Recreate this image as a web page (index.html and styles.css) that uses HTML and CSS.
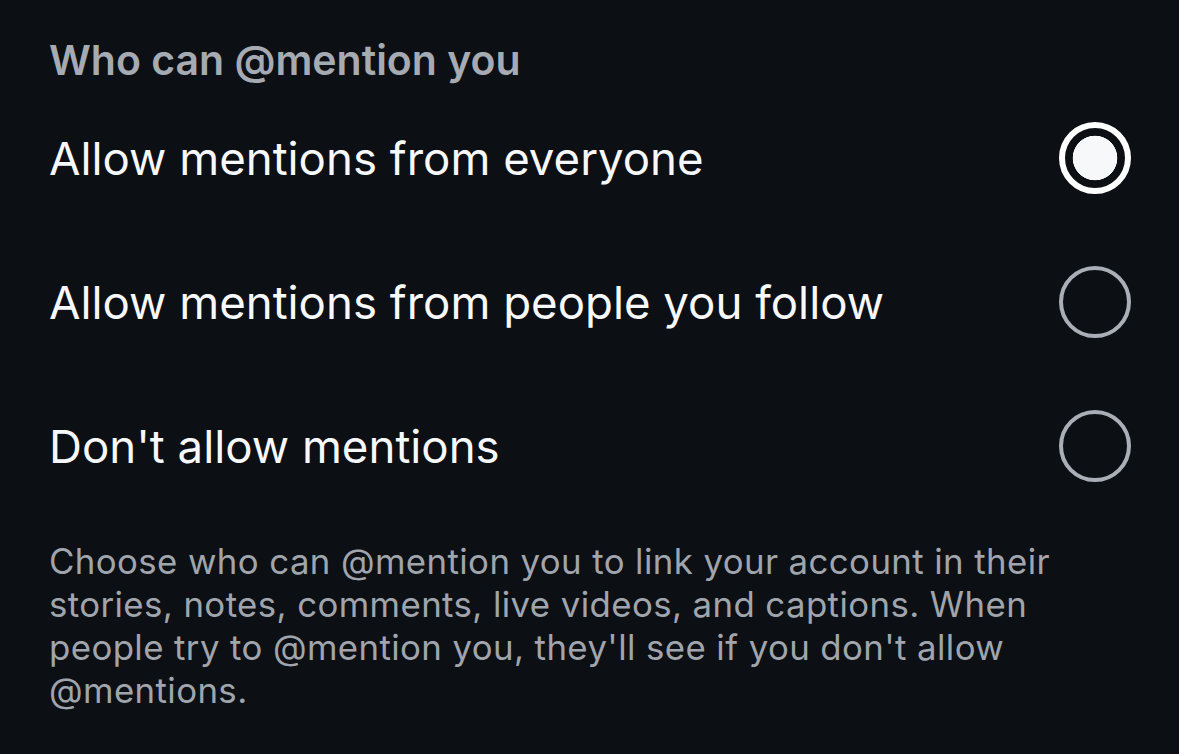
FILE: index.html
```html
<!DOCTYPE html>
<html lang="en">
<head>
<meta charset="utf-8">
<link rel="stylesheet" href="styles.css">
</head>
<body>
<main class="page">
  <h2 class="section-title">Who can @mention you</h2>
  <div class="options">
    <div class="option">
      <span class="option-label">Allow mentions from everyone</span>
      <span class="radio radio--on"></span>
    </div>
    <div class="option">
      <span class="option-label">Allow mentions from people you follow</span>
      <span class="radio"></span>
    </div>
    <div class="option">
      <span class="option-label">Don't allow mentions</span>
      <span class="radio"></span>
    </div>
  </div>
  <p class="note">Choose who can @mention you to link your account in their stories, notes, comments, live videos, and captions. When people try to @mention you, they'll see if you don't allow @mentions.</p>
</main>
</body>
</html>
```

FILE: styles.css
```css
* { box-sizing: border-box; }
html, body {
  margin: 0;
  padding: 0;
  background: #0c0f14;
  height: 100%;
}
body {
  font-family: "Inter", "Roboto", "Liberation Sans", sans-serif;
  color: #f5f6f8;
}
.page {
  padding: 36px 48px 0 49px;
}
.section-title {
  margin: 0;
  font-size: 41px;
  font-weight: 600;
  color: #a6abb3;
  line-height: 48px;
}
.options {
  margin-top: 38px;
  display: flex;
  flex-direction: column;
  gap: 72px;
}
.option {
  height: 72px;
  display: flex;
  align-items: center;
  justify-content: space-between;
}
.option-label {
  font-size: 45.6px;
  font-weight: 400;
  color: #f7f8fa;
}
.radio {
  width: 72px;
  height: 72px;
  border-radius: 50%;
  border: 4.5px solid #a9aeb7;
  flex: none;
}
.radio--on {
  border: 6px solid #ffffff;
  background: radial-gradient(circle, #f7f8fa 0 22px, #0c0f14 22.6px);
}
.note {
  margin: 58px 0 0 0;
  font-size: 34.8px;
  line-height: 43px;
  letter-spacing: 0.4px;
  color: #a0a5ad;
  padding-right: 30px;
}
```
